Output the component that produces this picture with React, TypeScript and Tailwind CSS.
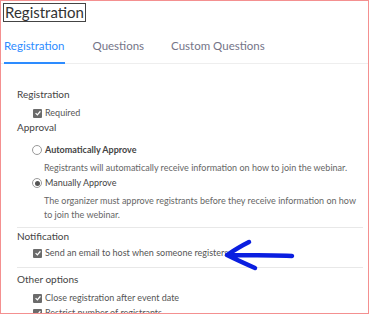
import React from 'react';

const Check: React.FC = () => (
  <span className="inline-flex h-[9px] w-[9px] shrink-0 items-center justify-center rounded-[1px] bg-[#6b6b6b]">
    <svg viewBox="0 0 10 10" className="h-[8px] w-[8px]">
      <path d="M2 5.2 L4.2 7.3 L8 2.8" fill="none" stroke="#fff" strokeWidth="1.6" />
    </svg>
  </span>
);

const Radio: React.FC<{ on?: boolean }> = ({ on }) => (
  <span className="inline-flex h-[10px] w-[10px] shrink-0 items-center justify-center rounded-full border border-[#9a9a9a] bg-white">
    {on && <span className="h-[5px] w-[5px] rounded-full bg-[#555]" />}
  </span>
);

const CheckRow: React.FC<{ label: string; className?: string }> = ({ label, className = '' }) => (
  <div className={`flex h-[14px] items-center gap-[3px] pl-[16px] text-[9px] text-[#555] ${className}`}>
    <Check />
    <span>{label}</span>
  </div>
);

const Label: React.FC<{ children: React.ReactNode; className?: string }> = ({ children, className = '' }) => (
  <div className={`text-[10px] leading-[14px] text-[#444] ${className}`}>{children}</div>
);

const App: React.FC = () => {
  return (
    <div className="relative h-[314px] w-[369px] overflow-hidden border border-[#f49090] bg-white" style={{ fontFamily: 'Lato, "Open Sans", sans-serif' }}>
      <div className="flex pl-[2px] pt-[2px]">
        <span className="border border-[#444] px-[1px] text-[15px] leading-[17px] text-[#333]">Registration</span>
      </div>

      <div className="mt-[16px] flex border-b border-[#eee] text-[11.5px] leading-[16px]">
        <div className="-mb-px ml-[3px] border-b-2 border-[#2d8cff] pb-[8px] text-[#2d8cff]">Registration</div>
        <div className="ml-[28px] text-[#747487]">Questions</div>
        <div className="ml-[27px] text-[#747487]">Custom Questions</div>
      </div>

      <div className="pl-[16px] pr-[5px] pt-[23px]">
        <Label>Registration</Label>
        <CheckRow label="Required" className="mt-[5px]" />
        <Label>Approval</Label>

        <div className="mt-[9px] flex h-[14px] items-center gap-[3px] pl-[15px] text-[9px] font-bold text-[#444]">
          <Radio />
          <span>Automatically Approve</span>
        </div>
        <div className="mt-[4px] pl-[27px] text-[9px] leading-[14px] text-[#666]">
          Registrants will automatically receive information on how to join the webinar.
        </div>
        <div className="mt-[1px] flex h-[14px] items-center gap-[3px] pl-[15px] text-[9px] text-[#444]">
          <Radio on />
          <span>Manually Approve</span>
        </div>
        <div className="mt-[4px] pl-[27px] text-[9px] leading-[14px] text-[#666]">
          The organizer must approve registrants before they receive information on how to join the webinar.
        </div>

        <div className="mt-[5px] border-t border-[#e8e8e8]" />
        <Label className="mt-[1px]">Notification</Label>
        <CheckRow label="Send an email to host when someone registers" className="mt-[3px]" />
        <div className="mt-[7px] border-t border-[#e8e8e8]" />
        <Label className="mt-[4px]">Other options</Label>
        <CheckRow label="Close registration after event date" className="mt-[5px]" />
        <CheckRow label="Restrict number of registrants" className="mt-[1px]" />
      </div>

      <svg className="absolute left-[219px] top-[235px]" width="80" height="38" viewBox="0 0 80 38">
        <path
          d="M29 6 C21 10 13 15 7 19 C15 23 26 28 35 32 M7 19 C30 19 52 19 72 20"
          fill="none"
          stroke="#0a1ee0"
          strokeWidth="4.5"
          strokeLinecap="round"
          strokeLinejoin="round"
        />
      </svg>
    </div>
  );
};

export default App;
